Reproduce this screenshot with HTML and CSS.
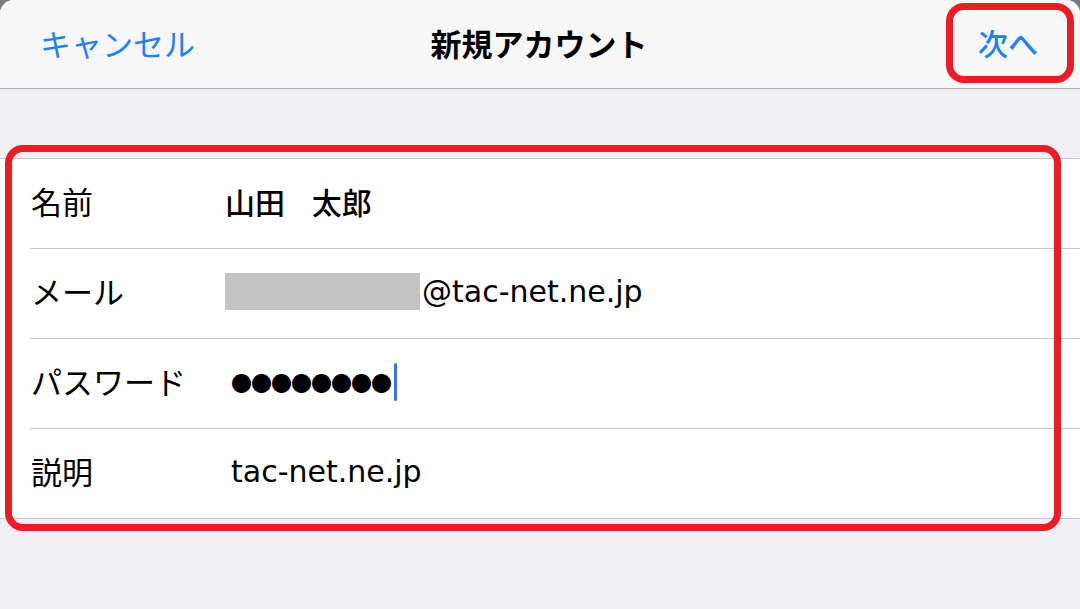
FILE: index.html
```html
<!DOCTYPE html>
<html lang="ja">
<head>
<meta charset="utf-8">
<title>新規アカウント</title>
<link rel="stylesheet" href="styles.css">
</head>
<body>
<div class="screen">
  <header class="navbar">
    <div class="nav-left">キャンセル</div>
    <div class="nav-title">新規アカウント</div>
    <div class="nav-right">次へ</div>
  </header>
  <main class="content">
    <section class="form">
      <div class="row">
        <div class="label">名前</div>
        <div class="value name">山田 太郎</div>
      </div>
      <div class="row">
        <div class="label">メール</div>
        <div class="value latin"><span class="redact"></span>@tac-net.ne.jp</div>
      </div>
      <div class="row">
        <div class="label">パスワード</div>
        <div class="value dots">●●●●●●●●<span class="caret"></span></div>
      </div>
      <div class="row">
        <div class="label">説明</div>
        <div class="value latin desc">tac-net.ne.jp</div>
      </div>
    </section>
  </main>
  <div class="mark mark-next"></div>
  <div class="mark mark-form"></div>
</div>
</body>
</html>
```

FILE: styles.css
```css
* { box-sizing: border-box; }
html, body {
  margin: 0;
  padding: 0;
  background: #7b7b7b;
  width: 1080px;
  height: 609px;
  overflow: hidden;
}
.screen {
  position: relative;
  width: 1080px;
  height: 609px;
  background: #efeff4;
  border-radius: 14px 14px 0 0;
  overflow: hidden;
  font-family: "Noto Sans CJK JP", "Noto Sans", sans-serif;
  color: #000;
}
.navbar {
  height: 89px;
  background: #f7f7f8;
  border-bottom: 1px solid #b2b2b4;
  display: grid;
  grid-template-columns: 1fr auto 1fr;
  align-items: center;
  padding: 0 42px 4px 40px;
  font-size: 31px;
}
.nav-left {
  color: #1a82fb;
  justify-self: start;
}
.nav-title {
  font-weight: 700;
  font-size: 31px;
}
.nav-right {
  color: #1a82fb;
  font-weight: 500;
  font-size: 30px;
  justify-self: end;
}
.content {
  padding-top: 69px;
}
.form {
  background: #fff;
  border-top: 1px solid #c8c7cc;
  border-bottom: 1px solid #c8c7cc;
}
.row {
  margin-left: 30px;
  height: 90px;
  display: flex;
  align-items: center;
  border-bottom: 1px solid #c8c7cc;
  font-size: 31px;
}
.row:last-child {
  border-bottom: none;
  height: 89px;
}
.label {
  width: 195px;
  padding-left: 1px;
  padding-bottom: 6px;
}
.value {
  display: flex;
  align-items: center;
  padding-bottom: 4px;
}
.name {
  font-weight: 500;
  font-size: 30px;
  word-spacing: 20px;
  padding-bottom: 6px;
}
.latin {
  font-family: "DejaVu Sans", "Noto Sans CJK JP", sans-serif;
  font-size: 30px;
}
.desc {
  padding-left: 6px;
}
.redact {
  display: inline-block;
  width: 195px;
  height: 37px;
  background: #c3c3c3;
  margin-right: 2px;
}
.dots {
  font-size: 21px;
  letter-spacing: -1px;
  padding-left: 6px;
}
.caret {
  display: inline-block;
  width: 3px;
  height: 38px;
  background: #3e6ef2;
  border-radius: 2px;
  margin-left: 3px;
}
.mark {
  position: absolute;
  border: 7px solid #ed1c24;
}
.mark-next {
  left: 946px;
  top: 3px;
  width: 128px;
  height: 80px;
  border-radius: 18px;
}
.mark-form {
  left: 5px;
  top: 145px;
  width: 1056px;
  height: 386px;
  border-radius: 18px;
}
```
